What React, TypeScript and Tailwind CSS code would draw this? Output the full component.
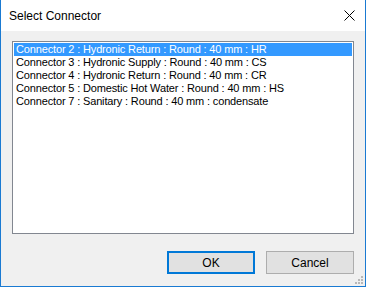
import React from "react"

const items = [
  "Connector 2 : Hydronic Return : Round : 40 mm : HR",
  "Connector 3 : Hydronic Supply : Round : 40 mm : CS",
  "Connector 4 : Hydronic Return : Round : 40 mm : CR",
  "Connector 5 : Domestic Hot Water : Round : 40 mm : HS",
  "Connector 7 : Sanitary : Round : 40 mm : condensate",
]

export default function App() {
  return (
    <div
      className="w-[366px] h-[287px] flex flex-col bg-[#f0f0f0] border-x border-b border-[#1a7ad2]"
      style={{ fontFamily: '"Liberation Sans", Arial, sans-serif' }}
    >
      {/* Title bar */}
      <div className="h-[31px] bg-white flex items-center justify-between pl-[8px] pr-[10px]">
        <span className="text-[12px] text-black">Select Connector</span>
        <svg width="11" height="11" viewBox="0 0 11 11" className="mt-[-1px]">
          <path d="M0.5 0.5 L10.5 10.5 M10.5 0.5 L0.5 10.5" stroke="#000" strokeWidth="1" fill="none" />
        </svg>
      </div>

      {/* Body */}
      <div className="flex-1 flex flex-col px-[11px] pt-[10px] relative">
        <div className="h-[193px] bg-white border border-[#828790] p-[1px] text-[11px] leading-[13px] tracking-[-0.15px]">
          {items.map((t, i) => (
            <div
              key={t}
              className={
                i === 0
                  ? "h-[13px] pl-[2px] bg-[#3399ff] text-white whitespace-nowrap"
                  : "h-[13px] pl-[2px] text-black whitespace-nowrap"
              }
            >
              {t}
            </div>
          ))}
        </div>

        <div className="flex justify-end gap-[11px] mt-[17px]">
          <button className="w-[88px] h-[23px] bg-[#e1e1e1] border-2 border-[#0078d7] text-[12px] text-black">
            OK
          </button>
          <button className="w-[88px] h-[23px] bg-[#e1e1e1] border border-[#adadad] text-[12px] text-black">
            Cancel
          </button>
        </div>

        {/* Resize grip */}
        <svg width="8" height="8" viewBox="0 0 8 8" className="absolute right-[2px] bottom-[2px]">
          {[
            [6, 0],
            [3, 3],
            [6, 3],
            [0, 6],
            [3, 6],
            [6, 6],
          ].map(([x, y]) => (
            <rect key={`${x}-${y}`} x={x} y={y} width="2" height="2" fill="#b8b8b8" />
          ))}
        </svg>
      </div>
    </div>
  )
}
